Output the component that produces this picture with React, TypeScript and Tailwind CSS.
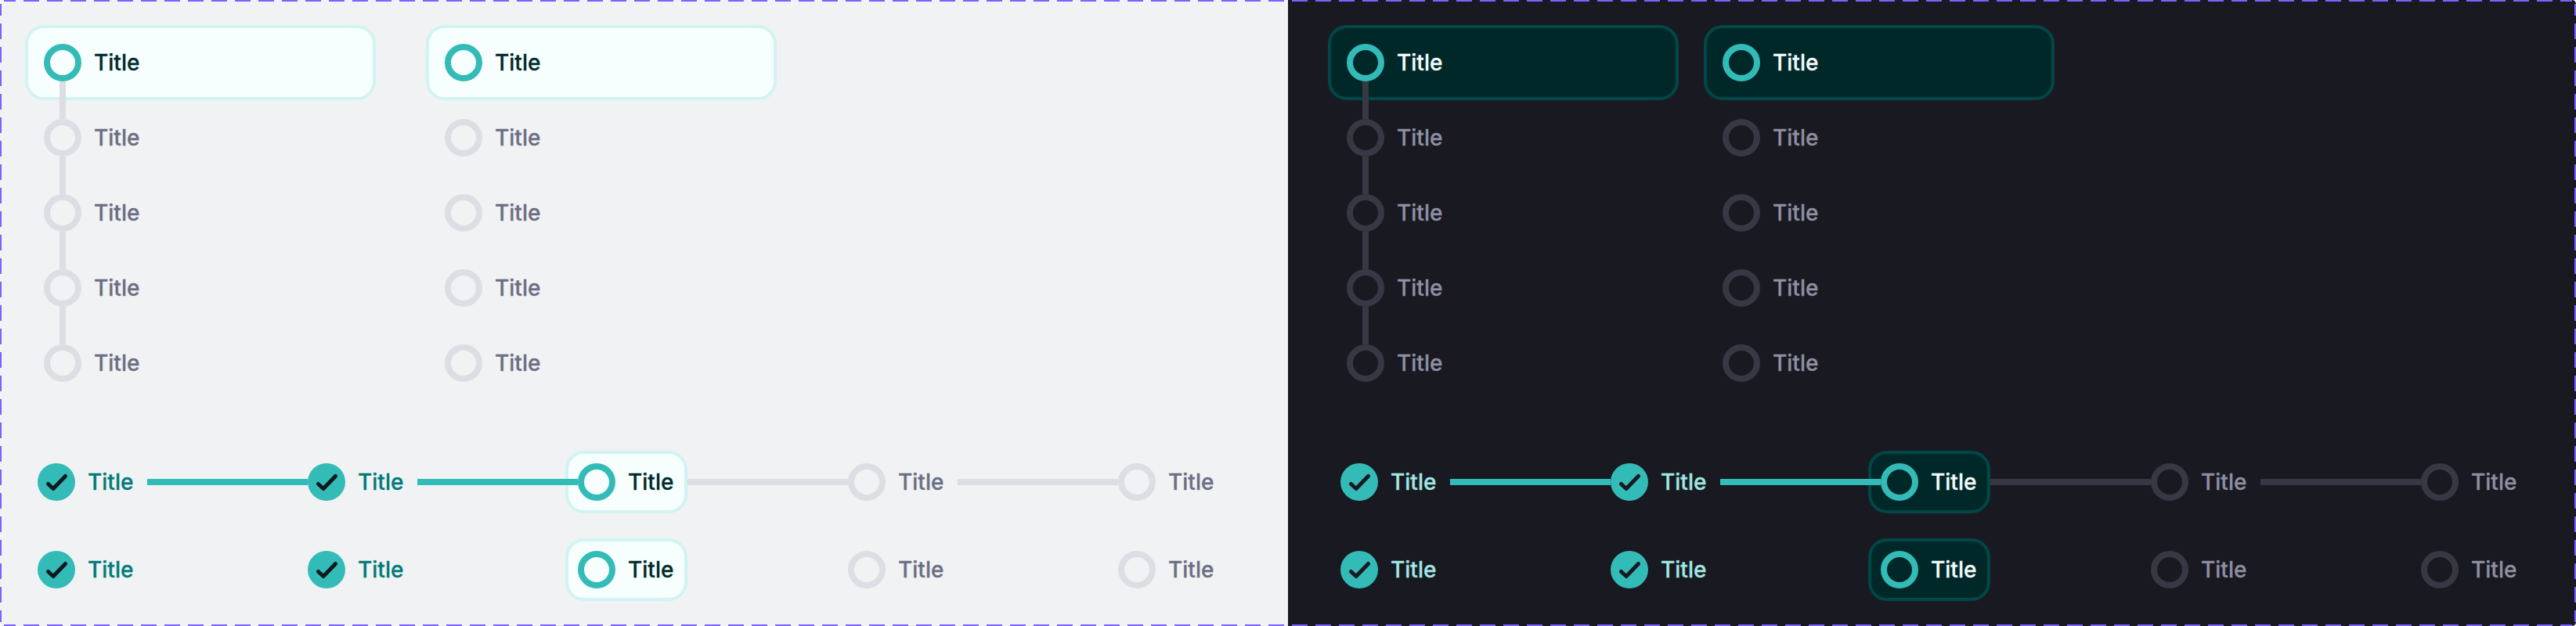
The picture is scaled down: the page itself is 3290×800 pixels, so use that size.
const FONT = "font-['Inter',sans-serif]";

type Step = 'done' | 'active' | 'idle';
type Tone = 'light' | 'dark';

const THEME = {
  light: {
    panel: 'bg-[#f0f2f4]',
    box: 'border-[#d1f3f2] bg-[#f7fffe]',
    line: 'bg-[#dddee3]',
    ring: 'border-[#dddee3]',
    active: 'text-[#002a2a]',
    idle: 'text-[#6c6e82]',
    done: 'text-[#007a78]',
    check: '#10181f',
  },
  dark: {
    panel: 'bg-[#191921]',
    box: 'border-[#004748] bg-[#002829]',
    line: 'bg-[#373843]',
    ring: 'border-[#373843]',
    active: 'text-[#f2fbfb]',
    idle: 'text-[#8e8fa3]',
    done: 'text-[#a1e7e3]',
    check: '#191921',
  },
};

function Marker({ step, tone }: { step: Step; tone: Tone }) {
  const t = THEME[tone];
  if (step === 'done') {
    return (
      <span className="relative z-20 block h-12 w-12 shrink-0 rounded-full bg-[#33bbb8]">
        <svg viewBox="0 0 48 48" className="h-12 w-12" fill="none">
          <path d="M13.5 26.5L20 32.5L35.5 16.5" stroke={t.check} strokeWidth="5" strokeLinecap="round" strokeLinejoin="round" />
        </svg>
      </span>
    );
  }
  return (
    <span
      className={`relative z-20 block h-12 w-12 shrink-0 rounded-full border-8 ${step === 'active' ? 'border-[#33bbb8]' : t.ring}`}
    />
  );
}

function Label({ step, tone }: { step: Step; tone: Tone }) {
  const t = THEME[tone];
  return <span className={`text-[28px] leading-[40px] font-medium [-webkit-text-stroke:0.3px] ${t[step]}`}>Title</span>;
}

function VerticalStep({ step, tone, line }: { step: Step; tone: Tone; line: boolean }) {
  const t = THEME[tone];
  const box = step === 'active' ? t.box : 'border-transparent';
  return (
    <div className={`relative flex h-24 w-[448px] items-center gap-4 rounded-3xl border-4 px-5 ${box}`}>
      <Marker step={step} tone={tone} />
      <Label step={step} tone={tone} />
      {line && <span className={`absolute top-[68px] left-10 z-10 h-12 w-2 ${t.line}`} />}
    </div>
  );
}

function VerticalStepper({ tone, lines }: { tone: Tone; lines: boolean }) {
  const steps: Step[] = ['active', 'idle', 'idle', 'idle', 'idle'];
  return (
    <div className="flex flex-col">
      {steps.map((s, i) => (
        <VerticalStep key={i} step={s} tone={tone} line={lines && i < steps.length - 1} />
      ))}
    </div>
  );
}

function HorizontalStep({ step, tone }: { step: Step; tone: Tone }) {
  const box = step === 'active' ? THEME[tone].box : 'border-transparent';
  return (
    <div className={`flex h-20 w-[156px] shrink-0 items-center gap-4 rounded-3xl border-4 px-3 ${box}`}>
      <Marker step={step} tone={tone} />
      <Label step={step} tone={tone} />
    </div>
  );
}

function HorizontalStepper({ tone, lines }: { tone: Tone; lines: boolean }) {
  const steps: Step[] = ['done', 'done', 'active', 'idle', 'idle'];
  return (
    <div className="flex items-center">
      {steps.map((s, i) => (
        <div key={i} className="flex items-center">
          <HorizontalStep step={s} tone={tone} />
          {i < steps.length - 1 &&
            (lines ? (
              <span
                className={`relative z-10 mr-[-16px] h-2 w-[205px] ${i < 2 ? 'bg-[#33bbb8]' : THEME[tone].line}`}
              />
            ) : (
              <span className="w-[189px]" />
            ))}
        </div>
      ))}
    </div>
  );
}

function Panel({ tone, className }: { tone: Tone; className: string }) {
  return (
    <section className={`flex h-full flex-col pt-8 ${THEME[tone].panel} ${className}`}>
      <div className={`flex ${tone === 'light' ? 'gap-16' : 'gap-8'}`}>
        <VerticalStepper tone={tone} lines />
        <VerticalStepper tone={tone} lines={false} />
      </div>
      <div className="mt-16 flex flex-col gap-8">
        <HorizontalStepper tone={tone} lines />
        <HorizontalStepper tone={tone} lines={false} />
      </div>
    </section>
  );
}

// Dashes are tiled from the frame's top-left on every side, so each side is its own line
function DashedFrame() {
  return (
    <svg className="pointer-events-none absolute inset-0 z-30" width="3290" height="800" fill="none">
      <g stroke="#7b61ff" strokeWidth="2" strokeDasharray="20 10" strokeDashoffset="5">
        <path d="M5 1H3285" />
        <path d="M5 799H3285" />
        <path d="M1 5V795" />
        <path d="M3289 5V795" />
      </g>
    </svg>
  );
}

export default function App() {
  return (
    <div className={`relative flex h-[800px] w-[3290px] overflow-hidden rounded-[5px] ${FONT}`}>
      <Panel tone="light" className="w-[1645px] pl-8" />
      <Panel tone="dark" className="flex-1 pl-[51px]" />
      <DashedFrame />
    </div>
  );
}
